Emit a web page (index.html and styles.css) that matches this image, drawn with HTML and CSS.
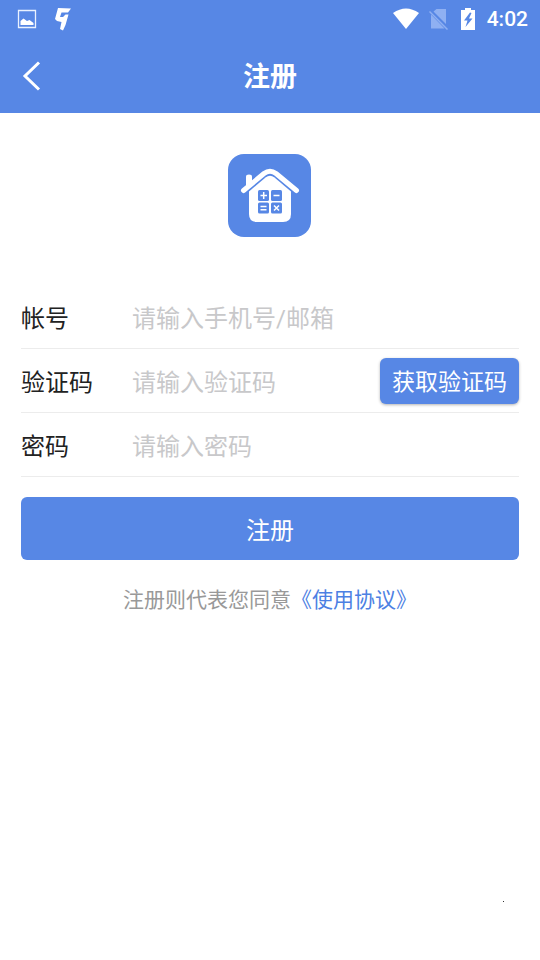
FILE: index.html
```html
<!DOCTYPE html>
<html lang="zh-CN">
<head>
<meta charset="utf-8">
<meta name="viewport" content="width=device-width, initial-scale=1">
<title>注册</title>
<link rel="stylesheet" href="styles.css">
</head>
<body>
<header class="header">
  <div class="status">
    <div class="status-group status-left">
      <svg width="20" height="20" viewBox="0 0 20 20" aria-hidden="true"><path d="M1.500 1.500h17v17h-17z" fill="none" stroke="#eaf2ff" stroke-width="1.300"/><path d="M3.500 16v-4l3-2.500 3.500 2.500 2.500-1 4 3v2z" fill="#fff"/></svg>
      <svg width="18" height="24" viewBox="0 0 18 24" aria-hidden="true"><path d="M4 1 17 1.500 14 5.500H7.500L6 10H9L11.500 7.500H14.500L11.500 18 9 23.500 6 22 7.500 15 3 14 1 12z" fill="#fff"/></svg>
    </div>
    <div class="status-group status-right">
      <svg width="26" height="22" viewBox="0 0 26 22" aria-hidden="true"><path d="M0 5Q13-4 26 5L13 21z" fill="#fff"/></svg>
      <svg width="20" height="22" viewBox="0 0 20 22" aria-hidden="true"><path d="M2 6.500V20.500h13.500zM4.500 3.500 7.500 1H17V16z" fill="#8fb0f2"/><path d="M.5 3.500 18.500 21.500" stroke="#8fb0f2" stroke-width="1.500"/></svg>
      <svg class="battery" width="14" height="22" viewBox="0 0 14 22" aria-hidden="true"><path d="M4 0h6v2h4v20H0V2h4z" fill="#fff"/><path d="M9 4.500 3 12.500h3.500L4.500 19l7-8.500H8L10.500 5z" fill="#5787e5"/></svg>
      <span class="clock">4:02</span>
    </div>
  </div>
  <nav class="nav">
    <button class="back" type="button" aria-label="返回"><svg width="20" height="32" viewBox="0 0 20 32" aria-hidden="true"><path d="M18 2.500 4 16l14 13.500" fill="none" stroke="#fff" stroke-width="3"/></svg></button>
    <h1 class="title">注册</h1>
  </nav>
</header>
<main class="main">
  <svg class="logo" width="84" height="83" viewBox="0 0 84 83" role="img" aria-label="房贷计算器">
    <rect width="83" height="83" rx="16" fill="#5787e5"/>
    <path d="M18 32V22.500q0-2 3-2t3 2v6" fill="#fff"/>
    <path d="M15.500 36 36 19q6-4.500 12 0l20.500 17" fill="none" stroke="#fff" stroke-width="5" stroke-linecap="round" stroke-linejoin="round" transform="translate(0 .5)"/>
    <path d="M21 37.500 37.500 23.500q4.500-3.500 9 0L63 37.500V60q0 8-8 8H29q-8 0-8-8z" fill="#fff"/>
    <g fill="#5787e5"><rect x="30" y="36" width="11" height="11" rx="1.500"/><rect x="43" y="36" width="11" height="11" rx="1.500"/><rect x="30" y="48.500" width="11" height="11" rx="1.500"/><rect x="43" y="48.500" width="11" height="11" rx="1.500"/></g>
    <path d="M32.500 41.500h6.500M35.700 38v7M45.500 41.500h6M32.500 52.500h6M32.500 55.700h6M46 51.500l5 5M51 51.500l-5 5" stroke="#fff" stroke-width="1.500"/>
  </svg>
  <form class="form">
    <div class="row">
      <label class="label" for="account">帐号</label>
      <input class="input" id="account" type="text" placeholder="请输入手机号/邮箱">
    </div>
    <div class="row">
      <label class="label" for="code">验证码</label>
      <input class="input" id="code" type="text" placeholder="请输入验证码">
      <button class="get-code" type="button">获取验证码</button>
    </div>
    <div class="row">
      <label class="label" for="password">密码</label>
      <input class="input" id="password" type="password" placeholder="请输入密码">
    </div>
    <button class="submit" type="submit">注册</button>
  </form>
  <p class="terms">注册则代表您同意<a href="#terms">《使用协议》</a></p>
</main>
<span class="speck"></span>
</body>
</html>
```
FILE: styles.css
```css
* { box-sizing: border-box; }
body {
  margin: 0;
  background: #fff;
  color: #222;
  font-family: Roboto, "Noto Sans CJK SC", sans-serif;
}
button, input { font-family: inherit; border: 0; padding: 0; }
svg { display: block; flex: none; }

.header { background: #5787e5; color: #fff; }
.status {
  display: flex;
  justify-content: space-between;
  align-items: center;
  height: 38px;
  padding: 0 12px 0 17px;
}
.status-group { display: flex; align-items: center; }
.status-left { gap: 17px; }
.status-right { gap: 10px; }
.status-right svg { margin-bottom: 1px; }
.battery { margin-left: 2px; }
.clock { margin-left: 2px; font-size: 21px; font-weight: 500; line-height: 24px; }
.nav {
  display: grid;
  grid-template-columns: 60px 1fr 60px;
  align-items: center;
  height: 75px;
}
.back {
  display: flex;
  align-items: center;
  height: 60px;
  padding-left: 21px;
  background: none;
}
.title {
  margin: 0;
  padding-top: 2px;
  font-size: 27px;
  font-weight: 700;
  line-height: 40px;
  text-align: center;
}

.main { padding: 41px 21px; }
.logo { margin: 0 auto 48px; }
.row {
  display: flex;
  align-items: center;
  height: 64px;
  border-bottom: 1px solid #ececec;
  font-size: 24px;
}
.label { flex: none; width: 111px; }
.input {
  flex: 1;
  min-width: 0;
  height: 48px;
  padding-top: 4px;
  background: none;
  color: #222;
  font-size: 24px;
  outline: 0;
}
.input::placeholder { color: #c8c8ca; opacity: 1; }
.get-code {
  flex: none;
  height: 46px;
  padding: 0 12px 2px;
  border-radius: 6px;
  background: #5787e5;
  box-shadow: 0 1px 3px rgba(0, 0, 0, .3);
  color: #fff;
  font-size: 23px;
}
.submit {
  display: block;
  width: 100%;
  height: 63px;
  margin-top: 20px;
  border-radius: 6px;
  background: #5787e5;
  color: #fff;
  font-size: 24px;
}
.terms {
  margin: 24px 0 0;
  color: #999;
  font-size: 21px;
  line-height: 32px;
  text-align: center;
}
.terms a { color: #4c80e3; text-decoration: none; }
.speck {
  position: absolute;
  right: 36px;
  top: 901px;
  width: 1px;
  height: 1px;
  background: #333;
}
```
